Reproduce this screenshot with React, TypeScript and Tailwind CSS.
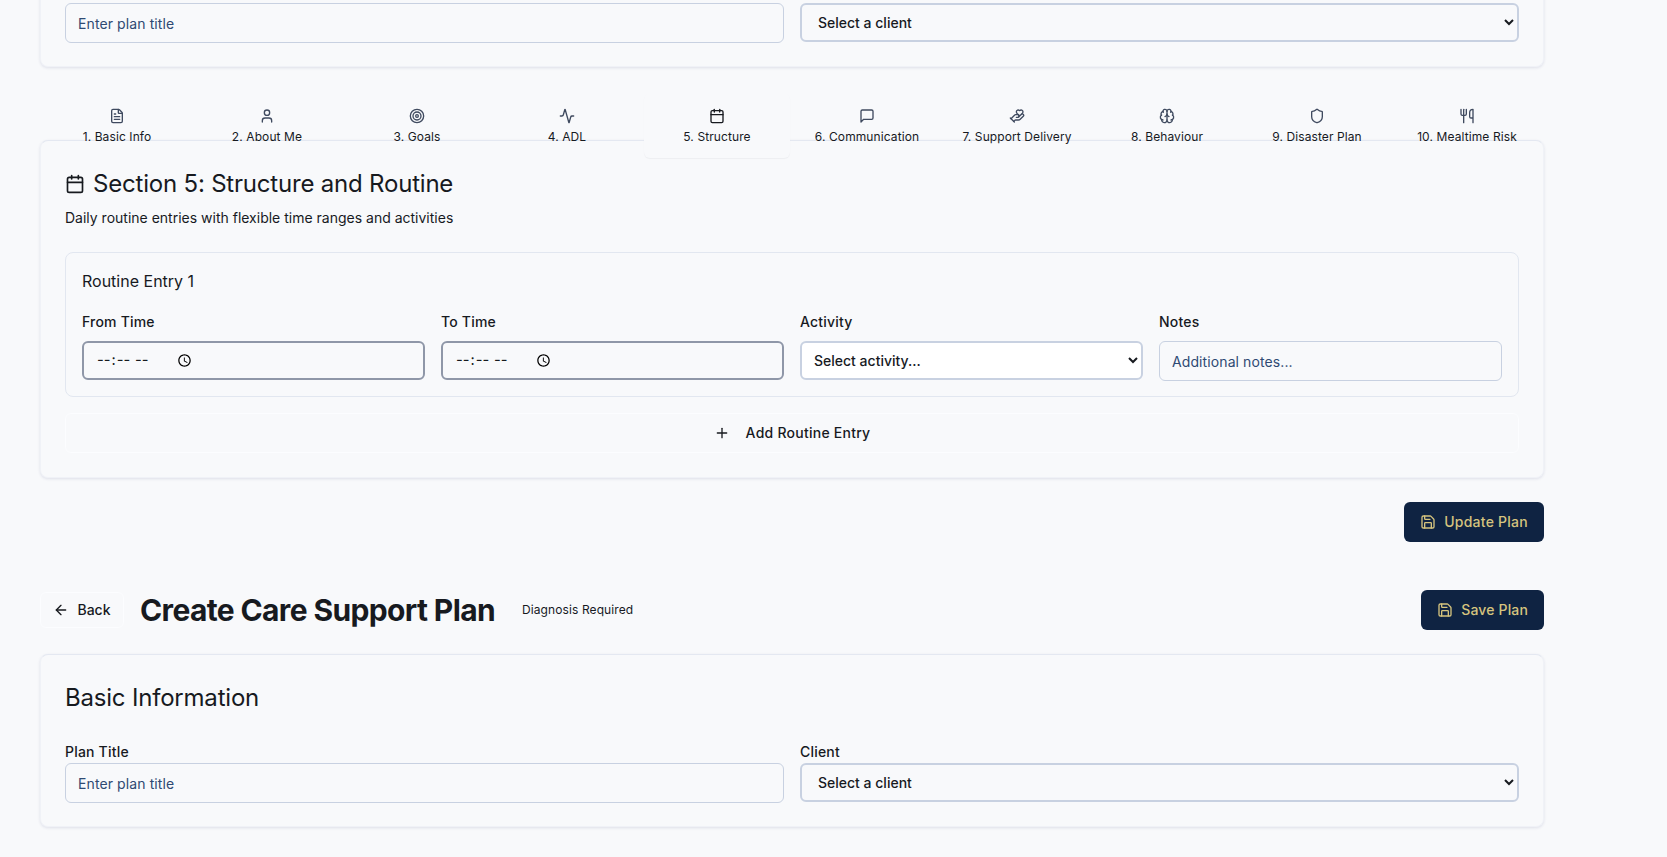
import React from "react";
import { FileText, User, Target, Activity, Calendar, HandHeart, Brain, Shield, Utensils, Plus, Save, ArrowLeft } from "lucide-react";

function MessageBubble({ className, strokeWidth }: { className?: string; strokeWidth?: number }) {
  return (
    <svg viewBox="0 0 24 24" fill="none" stroke="currentColor" strokeWidth={strokeWidth} strokeLinecap="round" strokeLinejoin="round" className={className}>
      <path d="M21 15a2 2 0 0 1-2 2H7l-4 4V5a2 2 0 0 1 2-2h14a2 2 0 0 1 2 2z" />
    </svg>
  );
}

const tabs = [
  { label: "1. Basic Info", Icon: FileText },
  { label: "2. About Me", Icon: User },
  { label: "3. Goals", Icon: Target },
  { label: "4. ADL", Icon: Activity },
  { label: "5. Structure", Icon: Calendar, active: true },
  { label: "6. Communication", Icon: MessageBubble },
  { label: "7. Support Delivery", Icon: HandHeart },
  { label: "8. Behaviour", Icon: Brain },
  { label: "9. Disaster Plan", Icon: Shield },
  { label: "10. Mealtime Risk", Icon: Utensils },
];

function BasicCard() {
  return (
    <section className="rounded-lg border border-[#f0f2f7] border-t-[#e4e8f1] shadow-[0_1px_3px_rgba(40,50,110,0.12)] bg-[#f8f9fb] px-6 pt-[27px] pb-[23px]">
      <h2 className="text-2xl leading-8 tracking-[-0.2px] text-[#171a1f] h-[36px]">Basic Information</h2>
      <div className="grid grid-cols-2 gap-4 mt-[26px]">
        <div>
          <label className="block text-sm font-medium tracking-[0.2px] leading-[16px] text-[#171a1f] mb-[3px]">Plan Title</label>
          <input placeholder="Enter plan title" className="block w-full h-10 rounded-md border border-[#c8d1e1] bg-[#f8f9fb] px-3 text-sm tracking-[0.1px] placeholder:text-[#2f4a73] outline-none" />
        </div>
        <div>
          <label className="block text-sm font-medium tracking-[0.2px] leading-[16px] text-[#171a1f] mb-[3px]">Client</label>
          <select className="block w-full h-[39px] rounded-md border-2 border-[#c8d1e1] bg-[#f8f9fb] pl-3 pr-0 text-sm font-medium text-[#171a1f] outline-none">
            <option>Select a client</option>
          </select>
        </div>
      </div>
    </section>
  );
}

function Field({ label, children }: { label: string; children: React.ReactNode }) {
  return (
    <div>
      <label className="block text-sm font-medium tracking-[0.2px] leading-5 text-[#171a1f] mb-[9px]">{label}</label>
      {children}
    </div>
  );
}

function TimeInput() {
  return <input type="time" className="flex w-full h-[39px] rounded-md border-2 border-[#8f97a8] bg-[#f8f9fb] px-3 text-[14.7px] text-[#171a1f] outline-none" />;
}

export default function App() {
  return (
    <div className="h-[857px] overflow-hidden bg-[#f8f9fb] text-[#171a1f] font-['Inter',sans-serif]">
      <div className="w-[1504px] ml-10 mt-[-106px]">
        <BasicCard />

        <div className="relative z-10 mt-6 h-10 p-1 grid grid-cols-10 gap-1">
          {tabs.map(({ label, Icon, active }) => (
            <div
              key={label}
              className={
                "h-[65px] -mt-[2px] flex flex-col items-center pt-[15px] rounded-md text-xs tracking-[0.1px] whitespace-nowrap " +
                (active ? "bg-[#f8f9fb] shadow-[0_1px_1px_rgba(30,41,59,0.05)] text-[#171a1f]" : "text-[#171a1f]")
              }
            >
              <Icon className={"w-4 h-4 " + (active ? "text-[#171a1f]" : "text-[#3f4a5f]")} strokeWidth={2} />
              <span className="mt-[5px] leading-4">{label}</span>
            </div>
          ))}
        </div>

        <section className="mt-[9px] rounded-lg border border-[#f0f2f7] border-t-[#e4e8f1] shadow-[0_1px_3px_rgba(40,50,110,0.12)] bg-[#f8f9fb] px-6 pt-[27px] pb-6">
          <div className="flex items-center gap-2 h-8">
            <Calendar className="w-5 h-5" strokeWidth={2} />
            <h2 className="text-2xl leading-8 tracking-[-0.2px]">Section 5: Structure and Routine</h2>
          </div>
          <p className="text-sm leading-5 mt-2">Daily routine entries with flexible time ranges and activities</p>

          <div className="mt-6 rounded-lg border border-[#e2e7f0] px-4 pt-4 pb-[15px]">
            <h3 className="text-base leading-6 font-normal">Routine Entry 1</h3>
            <div className="grid grid-cols-4 gap-4 mt-[19px]">
              <Field label="From Time"><TimeInput /></Field>
              <Field label="To Time"><TimeInput /></Field>
              <Field label="Activity">
                <select className="block w-full h-[39px] rounded-md border-2 border-[#c8d1e1] bg-white pl-2 pr-0 text-sm font-medium text-[#171a1f] outline-none">
                  <option>Select activity...</option>
                </select>
              </Field>
              <Field label="Notes">
                <input placeholder="Additional notes..." className="block w-full h-10 rounded-md border border-[#c8d1e1] bg-[#f8f9fb] px-3 text-sm tracking-[0.1px] placeholder:text-[#2f4a73] outline-none" />
              </Field>
            </div>
          </div>

          <button className="mt-4 w-full h-10 rounded-md border border-[#fcfdff] flex items-center justify-center gap-4 text-sm font-medium tracking-[0.25px]">
            <Plus className="w-4 h-4" />
            <span>Add Routine Entry</span>
          </button>
        </section>

        <div className="flex justify-end mt-6">
          <button className="h-10 px-4 rounded-md bg-[#0f2342] text-[#d6c47e] text-sm font-medium tracking-[0.25px] flex items-center gap-2">
            <Save className="w-4 h-4" />
            Update Plan
          </button>
        </div>

        <div className="flex items-center justify-between mt-12">
          <div className="flex items-center">
            <button className="h-9 w-[84px] rounded-md border border-[#fcfdff] flex items-center justify-center gap-2 text-sm font-medium">
              <ArrowLeft className="w-4 h-4" />
              Back
            </button>
            <h1 className="ml-4 text-3xl font-bold leading-9 tracking-[-0.63px]">Create Care Support Plan</h1>
            <span className="ml-[27px] text-xs tracking-[0.1px]">Diagnosis Required</span>
          </div>
          <button className="h-10 px-4 rounded-md bg-[#0f2342] text-[#d6c47e] text-sm font-medium tracking-[0.15px] flex items-center gap-2">
            <Save className="w-4 h-4" />
            Save Plan
          </button>
        </div>

        <div className="mt-6">
          <BasicCard />
        </div>
      </div>
    </div>
  );
}
